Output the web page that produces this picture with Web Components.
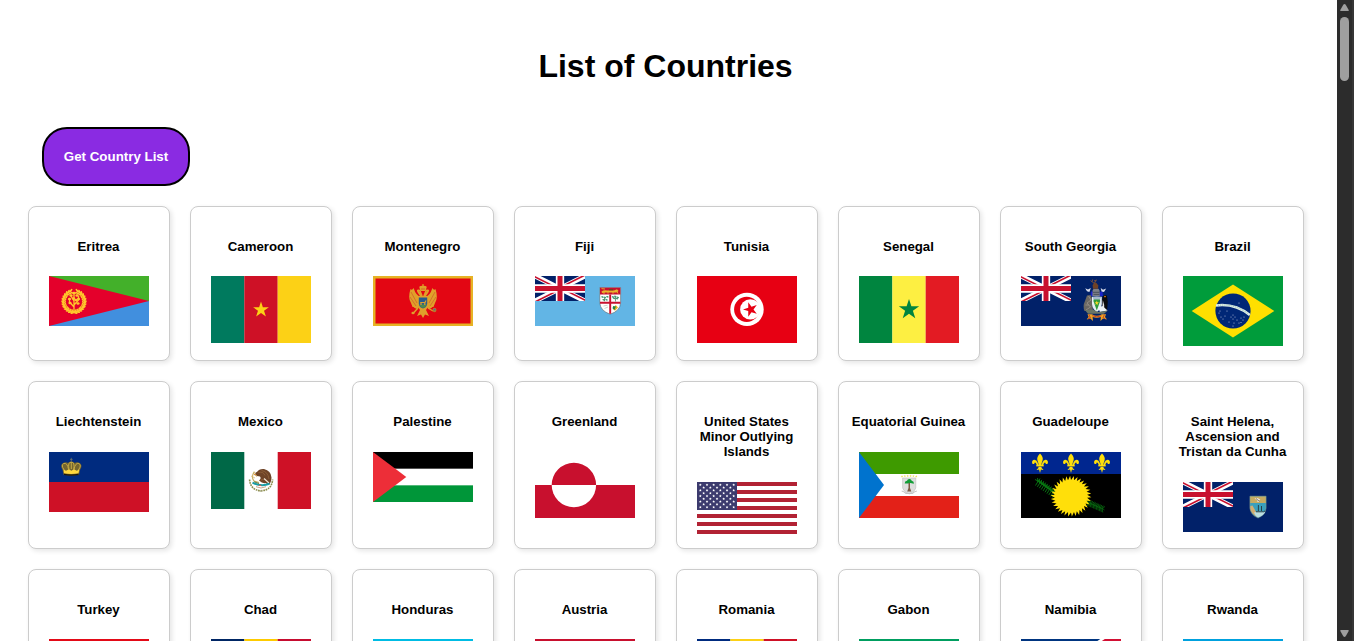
<!DOCTYPE html>
<html lang="en">
<head>
<meta charset="utf-8">
<title>List of Countries</title>
<style>
html,body{margin:0;height:100%;overflow:hidden;background:#fff}
body{font-family:"Liberation Sans",Arial,sans-serif;font-size:16px;color:#000}
</style>
</head>
<body>
<country-app></country-app>
<script>
const f1 = n => n.toFixed(2);
function star(cx, cy, r, fill, rot = -90, k = .382) {
  let p = '';
  for (let i = 0; i < 10; i++) {
    const a = (rot + i * 36) * Math.PI / 180, q = i % 2 ? r * k : r;
    p += f1(cx + q * Math.cos(a)) + ',' + f1(cy + q * Math.sin(a)) + ' ';
  }
  return `<polygon points="${p}" fill="${fill}"/>`;
}
function rect(x, y, w, h, c) { return `<rect x="${x}" y="${y}" width="${w}" height="${h}" fill="${c}"/>`; }
function path(d, c, extra = '') { return `<path d="${d}" fill="${c}" ${extra}/>`; }
function line(d, c, w, extra = '') { return `<path d="${d}" fill="none" stroke="${c}" stroke-width="${w}" ${extra}/>`; }
function ell(x, y, a, b, c, rot = 0) { return `<ellipse cx="${f1(x)}" cy="${f1(y)}" rx="${a}" ry="${b}" fill="${c}" transform="rotate(${rot} ${f1(x)} ${f1(y)})"/>`; }
const bars = (h, a, b, c) => rect(0, 0, 33.4, h, a) + rect(33.33, 0, 33.4, h, b) + rect(66.67, 0, 33.33, h, c);

const jack = `<svg x="0" y="0" width="50" height="25" viewBox="0 0 60 30">
<clipPath id="q"><path d="M30 15h30v15zM30 15v15H0zM30 15H0V0zM30 15V0h30z"/></clipPath>
<path d="M0 0h60v30H0z" fill="#012169"/><path d="M0 0l60 30M60 0L0 30" stroke="#fff" stroke-width="6"/>
<path d="M0 0l60 30M60 0L0 30" clip-path="url(#q)" stroke="#c8102e" stroke-width="4"/>
<path d="M30 0v30M0 15h60" stroke="#fff" stroke-width="10"/><path d="M30 0v30M0 15h60" stroke="#c8102e" stroke-width="6"/></svg>`;

function eritrea() {
  let s = rect(0, 0, 100, 25, '#43b02a') + rect(0, 25, 100, 25, '#418fde') + path('M0 0L100 25L0 50z', '#e4002b');
  s += line('M22.2 15.2A10.6 10.6 0 1 0 27.8 15.2', '#ffc72c', 1.9);
  for (let i = 0; i < 13; i++) {
    const t = (100 + i * 13) * Math.PI / 180;
    for (const m of [1, -1]) {
      const x = Math.cos(t) * m, y = Math.sin(t);
      s += ell(25 + x * 11.6, 25.5 + y * 11.6, 1.6, .85, '#ffc72c', m * (100 + i * 13) + 55 * m);
      s += ell(25 + x * 9, 25.5 + y * 9, 1.5, .75, '#ffc72c', m * (100 + i * 13) + 125 * m);
    }
  }
  s += line('M25 16V36M25 31L20.5 26V23M25 29L29.5 24V20M25 25L22 20', '#ffc72c', 1.3);
  for (const [x, y] of [[25, 17], [22, 19.5], [28, 19.5], [20.5, 23], [29.5, 23], [24.5, 22.5], [21, 27], [29, 27.5], [27, 24]]) s += ell(x, y, 1.6, 1.3, '#ffc72c');
  return s + rect(21.5, 35.4, 7, 2, '#ffc72c');
}
function montenegro() {
  const g = '#e0a02a';
  return rect(0, 0, 100, 50, '#e6b325') + rect(2.5, 2.5, 95, 45, '#e30613') +
    line('M42.8 18Q39 24 40 30L46 31M57.2 18Q61 24 60 30L54 31M48 20L45.3 16Q43.6 13.6 46.8 14.6L49 20M52 20L54.7 16Q56.4 13.6 53.2 14.6L51 20', g, 1.7) +
    path('M48 21Q43 20 40.6 12Q39 15 37.5 13Q34.6 22 38 27Q39 31 44 33L47 30zM52 21Q57 20 59.4 12Q61 15 62.5 13Q65.4 22 62 27Q61 31 56 33L53 30z', g) +
    line('M38 16L44 27M37 21L43 30M62 16L56 27M63 21L57 30', '#c9402a', .5) +
    path('M45 20H55V31L53 34L56 40L52 38.5L50 42L48 38.5L44 40L47 34L45 31z', g) +
    line('M45 32L40 37.5M55 32L60 35', g, 1.4) + ell(40, 37, 1.6, 1.2, g) + ell(61.5, 34, 2, 2.2, '#b8762f') + ell(61.5, 33.6, .9, .9, '#3c6fae') +
    path('M46.7 12.5Q45.5 9.8 48 10L50 9.4L52 10Q54.5 9.8 53.3 12.5L52.5 15H47.5z', g) + line('M50 8V11M49 9H51', g, .7) + line('M48 13H52', '#c9402a', .6) +
    path('M45.8 21.5H54.2V28Q53.6 31.5 50 32.5Q46.4 31.5 45.8 28z', '#2b5c8c') + path('M46.2 28.6H53.8Q53 31.3 50 32Q47 31.3 46.2 28.6z', '#4f8a4a') +
    line('M47.2 26.5H52L53 24.5M48 27V29M51.8 27V29', g, 1.2);
}
function fiji() {
  let s = rect(0, 0, 100, 50, '#62b5e5') + jack +
    path('M64.8 11.5H85.6V27Q85 35 75.2 38.2Q65.5 35 64.8 27z', '#fff', 'stroke="#555" stroke-width=".5"') +
    path('M65 11.7H85.4V18.5H65z', '#c8102e') + path('M66.5 15.6Q69 13.6 72 14.6H79L82 13.3L83.6 15L81.5 16.5H70L67 17z', '#e8b52a') + line('M69 16V18M73 16V17.7M78 16V17.7M82 15.5L83 17.5M66.5 12.6L70 13', '#e8b52a', .9) + rect(74, 13, 4, 1.3, '#6f431c');
  s += line('M75.2 18.5V37.8M65 26.7H85.4', '#c8102e', 1.9);
  for (const [x, y] of [[67.5, 21], [70, 21.5], [72.4, 20.8], [68.6, 23.8], [71.5, 23.8], [78, 21], [80.3, 20.4], [82.8, 21.4], [79, 22.3], [82, 22.6]]) s += ell(x, y, 1.3, .8, '#4a9a76', 20);
  s += line('M80.5 21V25.5M69.5 22V25.3', '#397052', .7) + line('M68.5 30L72.5 29.2M69.5 32.5L73 31', '#a8b8a2', .6);
  return s + path('M80.7 29L83 31.5L80 34.8L78 33z', '#e7b31c') + path('M78.2 30L81 30.5L79.4 34L77.5 32.3z', '#218345');
}
function tunisia() {
  return rect(0, 0, 100, 67, '#e70013') + ell(50, 33.4, 16.7, 16.7, '#fff') + ell(49.7, 33.4, 12.6, 12.6, '#e70013') + ell(53.3, 33.4, 10.2, 10.2, '#fff') + star(53.6, 33.4, 7.6, '#e70013', 180);
}
function southGeorgia() {
  return rect(0, 0, 100, 50, '#012169') + jack +
    path('M70 15.2L75.5 17L81.5 15.2L82 20H69.5z', '#1a22c9') +
    path('M66 19.5L69.5 19L71.5 23L71.8 35H63.5Q61.5 30 64 25z', '#6b6762') + line('M67.5 20L70 24L66 27L69.5 31L65 34M64.5 29H68', '#9a938b', .8) +
    path('M82 20.5Q84 17.7 86 20L86.8 26L86 35H81.2L80.8 25z', '#0b0b0e') + path('M81.8 24Q83.6 28 83.2 34H81.4z', '#e8e8e8') + ell(84, 20.6, .8, .8, '#f08b21') +
    path('M64.2 12.3L67 13.6L69.8 12L68.4 16L66 15.2zM79.7 12L82 13.8L85.2 12.5L83 16L80.6 15.6z', '#dce0ee') +
    path('M71.6 14.6L72.6 12.8H77.6L78.6 14.8L78.8 20H71.4z', '#7d8088') + line('M72 16.3H78.5M72.5 18.4H78.4', '#3c4250', .8) +
    path('M72 12.8L71.6 9L73.5 6.5L75.5 7L77.3 9.4L77 12.8z', '#6f4226') + line('M73.3 7.4L69.5 4.6M71.2 5.6L71.7 3.4M73.6 7L75.3 3.6M73 4.7L75.5 4.8', '#8c5836', .8) +
    path('M71 20.7H80.8V28Q80 33.5 75.8 36Q71.6 33.5 71 28z', '#e7eef2') + path('M73 22H78.6L79.2 25L75.8 34.5L72.4 25z', '#2f9a3c') + path('M71.6 21L75.8 20.5L80 21L79 23.6H72.6z', '#a7b8cc') + star(75.8, 27, 2.4, '#ffdc28') +
    path('M77 31.5L81.5 30L86.6 34.5L79 36z', '#eef2f5') +
    path('M64 34.2L72 33.5L77 36L86.6 34.8L83 37.8H67z', '#6b7665') +
    path('M66.5 38.2H71Q76 41.2 80.8 38.2H85L84 41L86 43.5L82 42.6L79.5 45L79.8 41Q75.8 42.6 71.6 41L72 45L69.3 42.6L65.6 43.5L67.6 41z', '#f0a524') +
    line('M68 38.6L69.4 42M83.4 38.6L82 42M71.2 39.7Q76 42 80.4 39.7M67 43L69 41.8M84.4 43L82.5 41.8', '#c23a20', .9);
}
function brazil() {
  let s = rect(0, 0, 100, 70, '#009c3b') + path('M50 8.6L91.3 35L50 61.4L8.7 35z', '#ffdf00') + ell(50, 35, 17.6, 17.6, '#002776');
  s += line('M33 29.4Q52 27 66.8 39', '#e1ede8', 2.5) + line('M35 29.3Q52 27.5 65 37.7', '#55a98c', .6, 'stroke-dasharray="1 .9"');
  for (const [x, y] of [[36, 37], [38, 41], [40, 43], [42, 40], [37, 35], [50, 39], [50, 43], [52, 41], [48, 41], [51, 47], [54, 44], [58, 42], [60, 44], [61, 41], [56, 47], [46, 46], [50, 50], [58, 46.5], [56, 27], [44, 35]]) s += ell(x, y, .5, .5, '#cfd9ed');
  return s;
}
function liechtenstein() {
  return rect(0, 0, 100, 30, '#002b7f') + rect(0, 30, 100, 30, '#ce1126') +
    path('M14.5 22.8L13.6 18Q10.5 13 14 11Q17 9.6 19 11Q20 9.2 22.3 9.4Q24.6 9.2 25.7 11Q28 9.6 30.6 11Q34.1 13 31 18L30 22.8Q22 24.3 14.5 22.8z', '#74652f') +
    line('M15.2 18Q11.7 13.2 14.7 11.5Q18.3 10.4 19.6 17.5M29.4 18Q32.9 13.2 29.9 11.5Q26.3 10.4 25 17.5M20 17.5Q18.5 10 22.3 10.2Q26 10 24.7 17.5M22.3 10V17', '#c4aa45', 1) +
    path('M14.5 17.4L17 18.7L20 17.2L22.3 18.7L25 17.2L27.7 18.7L30.3 17.4L29.5 21.3Q22 22.6 15 21.3z', '#ffd83d') + line('M15 22.4Q22 23.8 29.6 22.4', '#1c1708', 1.1) + line('M22.3 5.8V9.5M21 7.4H23.6', '#7b7a68', .7);
}
function mexico() {
  let s = rect(0, 0, 100, 57, '#fff') + rect(0, 0, 33.3, 57, '#006847') + rect(66.7, 0, 33.3, 57, '#ce1126');
  s += line('M38.6 27.5Q39.2 38 50 38.8Q61 38 61.6 27.5', '#8b8b4a', 1.6, 'stroke-dasharray="1.7 .8"') + ell(50, 39, 1.4, .8, '#a7aa84');
  s += path('M46 20Q48 16.6 53 17Q60 18.6 60.5 25.5Q60.4 30.6 57.5 33L54.6 31Q51.5 31.7 48 28.6Q50.6 26.4 49 24.5Q46 24 44 23Q44 20 46 20z', '#6f4427');
  s += line('M47.5 20.5Q52 19 54 23.5M50.5 18.5Q57 19.5 58 27M50 28Q55 26 57.5 31', '#98683e', .7) + line('M53 26.5L58 31', '#f1e7d7', 1.1) + line('M43.4 19.6Q39.7 25 43 29L48 30.5', '#c7ad62', 1.2) + line('M40 24L44 26M43 20L46 25', '#d8be77', .8) + line('M43 22.5L45.3 23', '#d8872e', 1);
  s += line('M41.5 30.6Q50 35 58.5 31.8', '#199da6', 2) + line('M43 29.8L48 31.5', '#5a7d46', 1) + line('M45 34.7L50 36L55 34.7', '#be8c67', .8) + ell(49, 33.4, 1.4, .6, '#d4604b');
  return s;
}
function usa() {
  let s = rect(0, 0, 100, 52, '#fff');
  for (let i = 0; i < 7; i++) s += rect(0, i * 8, 100, 4, '#b22234');
  s += rect(0, 0, 40, 28, '#3c3b6e');
  for (let r = 0; r < 9; r++) for (let c = 0; c < (r % 2 ? 5 : 6); c++) s += star((r % 2 ? 6.67 : 3.33) + c * 6.67, 2.8 + r * 2.8, 1.4, '#fff', -90, .5);
  return s;
}
function guinea() {
  let s = rect(0, 0, 100, 66, '#fff') + rect(0, 0, 100, 22, '#3e9a00') + rect(0, 44, 100, 22, '#e32118') + path('M0 0L25 33L0 66z', '#0073ce');
  s += path('M43.6 26H56.8V36Q56 39.7 50.2 42Q44.5 39.7 43.6 36z', '#dedede', 'stroke="#bbb" stroke-width=".55"');
  for (let i = 0; i < 6; i++) s += star(43 + i * 2.85, 24.6 - Math.sin((i + .5) / 6 * Math.PI) * .7, 1.3, '#ebd94a');
  s += path('M45.7 31.5Q45.6 29 48 28.8Q48.6 26.5 51 27Q52.4 27.6 52.7 28.8Q55.2 29.4 54.9 31.7L51.5 31L49 31.5z', '#129d37') + path('M49.5 31H51V36L52.3 39.4H48.2L49.5 36z', '#7a5b43');
  return s + line('M42.7 39Q45 39.5 47.2 41.5H53.2Q55.5 39.5 57.8 39', '#c4c4c4', 1.1);
}
function guadeloupe() {
  let s = rect(0, 0, 100, 66, '#000') + rect(0, 0, 100, 22, '#00268f');
  for (const x of [19, 50, 81]) s += `<g transform="translate(${x} 0)">` + path('M0 1.4Q3.6 5 2.6 8.2Q1.5 11 1.4 13H-1.4Q-1.5 11-2.6 8.2Q-3.6 5 0 1.4zM-1.7 13L-2.4 10.5Q-3.5 7.4-6 7.7Q-8.7 8.6-7.7 11.5Q-7 12.5-5.7 11.8Q-5.4 9.8-4 11.2L-3.2 13zM1.7 13L2.4 10.5Q3.5 7.4 6 7.7Q8.7 8.6 7.7 11.5Q7 12.5 5.7 11.8Q5.4 9.8 4 11.2L3.2 13zM-1.3 14.7H1.3Q1.5 17 3.5 17.2Q2 18.8 1 17.3L0 21L-1 17.3Q-2 18.8-3.5 17.2Q-1.5 17-1.3 14.7z', '#ffdf0a') + rect(-3.7, 12.8, 7.4, 1.6, '#ffdf0a') + '</g>';
  for (let i = 0; i < 11; i++) {
    const x = 17 + i * 1.9, y = 29.5 + i * 1.35;
    s += line(`M${x} ${y}L${x - .5} ${y - 3.5}M${x} ${y}L${x - 2.5} ${y + 4}M${x - 3} ${y - 2}L${x + 3} ${y + 1}M${x} ${y}L${x + 2} ${y - 3}`, '#087b12', .9);
    const u = 66 + i * 1.5, v = 49.5 + i * .65;
    s += line(`M${u} ${v}L${u + 3} ${v - 1.4}M${u} ${v}L${u + .8} ${v + 4.5}M${u} ${v}L${u + 2.5} ${v + 2}`, '#086b10', .8);
  }
  let p = '';
  const n = 34;
  for (let i = 0; i < n * 2; i++) { const a = i * Math.PI / n + (i % 2 ? 0 : .05), r = i % 2 ? 16.2 : 20.4; p += f1(50 + r * Math.cos(a)) + ',' + f1(44.2 + r * Math.sin(a)) + ' '; }
  return s + `<polygon points="${p}" fill="#ffdf0a"/>`;
}
function helena() {
  return rect(0, 0, 100, 50, '#012169') + jack + path('M66.9 14.2H83.1V26Q82.5 33 75 36Q67.5 33 66.9 26z', '#3aa0bd', 'stroke="#999b7a" stroke-width=".5"') +
    rect(67.2, 14.5, 15.6, 6.5, '#c6ab62') + path('M71.5 16.6L74.5 16L77.4 17.5L75.5 18.8L77 20H74.5L74 18.2z', '#e9e4d9') + line('M73 16.5L76.5 19.5', '#514c49', .7) +
    path('M67.4 24L69.5 23.5L72.8 29.5L74 34.8Q68.3 32 67.4 27z', '#d3ae72') + path('M71 30.5Q76 29 82.2 30Q80.5 33.5 75 35.5Q72 34 71 30.5z', '#bbdfe1') + line('M73 29.8H80.8L82 28.8M75.4 29V23M78.5 29V24', '#27353a', .9);
}

const FLAGS = {
  er: [50, eritrea],
  cm: [67, () => bars(67, '#007a5e', '#ce1126', '#fcd116') + star(50, 33.8, 8.3, '#fcd116')],
  me: [50, montenegro], fj: [50, fiji], tn: [67, tunisia],
  sn: [67, () => bars(67, '#00853f', '#fdef42', '#e31b23') + star(50, 33.6, 10.7, '#00853f')],
  gs: [50, southGeorgia], br: [70, brazil], li: [60, liechtenstein], mx: [57, mexico],
  ps: [50, () => rect(0, 0, 100, 50, '#fff') + rect(0, 0, 100, 16.67, '#000') + rect(0, 33.33, 100, 16.67, '#009639') + path('M0 0L33.3 25L0 50z', '#ed2e38')],
  gl: [66, () => rect(0, 0, 100, 66, '#fff') + rect(0, 33, 100, 33, '#c8102e') + path('M16.7 33A22.2 22.2 0 0 1 61.1 33z', '#c8102e') + path('M16.7 33A22.2 22.2 0 0 0 61.1 33z', '#fff')],
  um: [52, usa], gq: [66, guinea], gp: [66, guadeloupe], sh: [50, helena],
  tr: [67, () => rect(0, 0, 100, 67, '#e30a17') + ell(35, 33, 16, 16, '#fff') + ell(39, 33, 13, 13, '#e30a17') + star(54, 33, 8, '#fff', 180)],
  td: [67, () => bars(67, '#002664', '#fecb00', '#c60c30')],
  hn: [50, () => rect(0, 0, 100, 50, '#fff') + rect(0, 0, 100, 16.7, '#00bce4') + rect(0, 33.3, 100, 16.7, '#00bce4')],
  at: [67, () => rect(0, 0, 100, 67, '#c8102e') + rect(0, 22.3, 100, 22.3, '#fff')],
  ro: [67, () => bars(67, '#002b7f', '#fcd116', '#ce1126')],
  ga: [70, () => rect(0, 0, 100, 24, '#009e60') + rect(0, 23.3, 100, 24, '#fcd116') + rect(0, 46.7, 100, 23.3, '#3a75c4')],
  na: [67, () => rect(0, 0, 100, 67, '#003580') + path('M100 0V67H0z', '#009543') + line('M0 67L100 0', '#fff', 23) + line('M-5 70.35L105 -3.35', '#d21034', 18)],
  rw: [67, () => rect(0, 0, 100, 67, '#20603d') + rect(0, 0, 100, 33.5, '#00a1de') + rect(0, 33.5, 100, 17, '#fad201')]
};

customElements.define('country-flag', class extends HTMLElement {
  connectedCallback() {
    const [h, draw] = FLAGS[this.getAttribute('code')];
    this.attachShadow({ mode: 'open' }).innerHTML = `<style>:host{display:block;width:100px}svg{display:block;overflow:hidden}</style>
      <svg width="100" height="${h}" viewBox="0 0 100 ${h}" aria-hidden="true">${draw()}</svg>`;
  }
});

customElements.define('country-card', class extends HTMLElement {
  connectedCallback() {
    this.attachShadow({ mode: 'open' }).innerHTML = `<style>
      :host{display:flex;flex-direction:column;align-items:center;box-sizing:border-box;padding:10px 10px 14px;border:1px solid #ccc;border-radius:8px;box-shadow:2px 2px 5px rgba(0,0,0,.1);background:#fff;text-align:center}
      h5{margin:22px 0 22.36px;padding-right:1px;font-size:13.28px;line-height:15px;font-weight:bold}
      </style><h5><slot></slot></h5><country-flag code="${this.getAttribute('code')}"></country-flag>`;
  }
});

customElements.define('fetch-button', class extends HTMLElement {
  connectedCallback() {
    this.attachShadow({ mode: 'open' }).innerHTML = `<style>
      :host{display:block}
      button{display:block;box-sizing:border-box;width:148px;height:59px;padding:0;border:2px solid #000;border-radius:25px;background:#8a2be2;color:#fff;font:bold 13.33px "Liberation Sans",Arial,sans-serif}
      </style><button type="button"><slot></slot></button>`;
  }
});

customElements.define('scroll-rail', class extends HTMLElement {
  connectedCallback() {
    this.attachShadow({ mode: 'open' }).innerHTML = `<style>
      :host{display:flex;flex-direction:column;align-items:flex-start;box-sizing:border-box;width:17px;padding:4px 0 4px 3px;background:linear-gradient(90deg,#2c2c2c 15px,#363636 15px)}
      svg{display:block}
      .thumb{width:9px;height:64px;margin-top:6px;border-radius:4.5px;background:#9f9f9f}
      .down{margin-top:auto}
      </style><svg width="9" height="7"><path d="M3.3.8Q4.5-.8 5.7.8L8.7 6Q9 7 8 7H1Q0 7 .3 6z" fill="#9f9f9f"/></svg>
      <div class="thumb"></div>
      <svg class="down" width="9" height="7"><path d="M3.3 6.2Q4.5 7.8 5.7 6.2L8.7 1Q9 0 8 0H1Q0 0 .3 1z" fill="#9f9f9f"/></svg>`;
  }
});

const COUNTRIES = [['er', 'Eritrea'], ['cm', 'Cameroon'], ['me', 'Montenegro'], ['fj', 'Fiji'], ['tn', 'Tunisia'], ['sn', 'Senegal'], ['gs', 'South Georgia'], ['br', 'Brazil'],
  ['li', 'Liechtenstein'], ['mx', 'Mexico'], ['ps', 'Palestine'], ['gl', 'Greenland'], ['um', 'United States Minor Outlying Islands'], ['gq', 'Equatorial Guinea'], ['gp', 'Guadeloupe'], ['sh', 'Saint Helena, Ascension and Tristan da Cunha'],
  ['tr', 'Turkey'], ['td', 'Chad'], ['hn', 'Honduras'], ['at', 'Austria'], ['ro', 'Romania'], ['ga', 'Gabon'], ['na', 'Namibia'], ['rw', 'Rwanda']];

customElements.define('country-app', class extends HTMLElement {
  connectedCallback() {
    this.attachShadow({ mode: 'open' }).innerHTML = `<style>
      :host{display:flex;height:100vh;overflow:hidden}
      main{flex:1;overflow:hidden;padding:0 33px 0 28px}
      h1{margin:48px 0 42px;width:1275px;text-align:center;font-size:32px;line-height:37px}
      fetch-button{margin:0 0 20px 14px}
      .grid{display:grid;grid-template-columns:repeat(8,142px);gap:20px}
      </style><main><h1>List of Countries</h1><fetch-button>Get Country List</fetch-button>
      <div class="grid">${COUNTRIES.map(([c, n]) => `<country-card code="${c}">${n}</country-card>`).join('')}</div></main><scroll-rail></scroll-rail>`;
  }
});
</script>
</body>
</html>
